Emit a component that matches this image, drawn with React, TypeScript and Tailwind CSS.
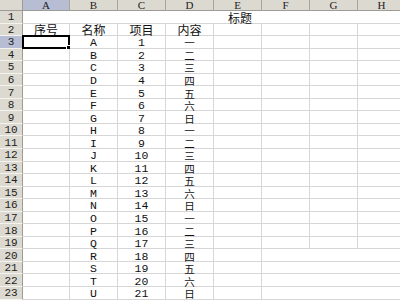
import React from "react";

const COLS = ["A", "B", "C", "D", "E", "F", "G", "H"];
const WEEK = ["一", "二", "三", "四", "五", "六", "日"];

const latin = { fontFamily: '"Liberation Mono", "Noto Sans CJK SC", monospace' };
const cjk = { fontFamily: '"Noto Sans CJK SC", "Liberation Sans", sans-serif' };

function cellText(row: number, col: number): string {
  if (row === 2) {
    return ["序号", "名称", "项目", "内容"][col] ?? "";
  }
  if (row >= 3) {
    const i = row - 3;
    if (col === 1) return String.fromCharCode(65 + i);
    if (col === 2) return String(i + 1);
    if (col === 3) return WEEK[i % 7];
  }
  return "";
}

function DataCell({ row, col }: { row: number; col: number }) {
  const text = cellText(row, col);
  const hasRight = row <= 19 || col <= 4;
  const isHeading = row === 2;
  const isWeek = row >= 3 && col === 3;
  const selected = row === 3 && col === 0;
  const font = isHeading
    ? { ...cjk, fontSize: "12px", lineHeight: "12px" }
    : isWeek
    ? { ...cjk, fontSize: "10.5px", lineHeight: "11px" }
    : { ...latin, fontSize: "11.5px", lineHeight: "11px" };
  return (
    <div
      className={
        (hasRight ? "border-r border-[#d6d6d6] " : "") +
        "relative flex items-center justify-center border-b border-[#d6d6d6] bg-white leading-none text-[#111]"
      }
    >
      <span style={font} className="block translate-y-[1px]">
        {text}
      </span>
      {selected && (
        <>
          <div className="absolute -left-[1px] -top-[1px] -right-[1px] -bottom-[1px] border-2 border-black" />
          <div className="absolute -right-[2px] -bottom-[2px] h-[5px] w-[5px] border border-white bg-black" />
        </>
      )}
    </div>
  );
}

function RowHeader({ n }: { n: number }) {
  const sel = n === 3;
  return (
    <div
      className={
        (sel ? "bg-[#b7bed4] " : "bg-[#dcd9d1] ") +
        "flex items-center justify-center border-b border-r border-b-[#f4f3ef] border-r-[#9d9b94] text-[11px] leading-none text-[#222]"
      }
      style={latin}
    >
      <span className="block translate-y-[1px]">{n}</span>
    </div>
  );
}

export default function App() {
  const rows = Array.from({ length: 23 }, (_, i) => i + 1);
  return (
    <div className="h-[300px] w-[400px] overflow-hidden bg-white">
      <div className="grid w-[430px] grid-cols-[23px_47px_48px_48px_48px_48px_48px_48px_48px] grid-rows-[11px_repeat(23,12.55px)]">
        {/* corner */}
        <div className="border-b border-r border-[#9d9b94] bg-[#dcd9d1]" />
        {COLS.map((c, i) => (
          <div
            key={c}
            className={
              (i === 0 ? "bg-[#b7bed4] " : "bg-[#dcd9d1] ") +
              "flex items-center justify-center border-b border-r border-b-[#9d9b94] border-r-[#a9a69e] text-[11px] leading-none text-[#222]"
            }
            style={{ fontFamily: '"Liberation Serif", serif' }}
          >
            {c}
          </div>
        ))}
        {rows.map((r) =>
          r === 1 ? (
            <React.Fragment key={r}>
              <RowHeader n={1} />
              <div className="col-span-8 flex items-center border-b border-[#d6d6d6] bg-white pl-[205px] text-[12px] leading-none text-[#111]">
                <span style={{ ...cjk, lineHeight: "12px" }} className="block translate-y-[1px]">标题</span>
              </div>
            </React.Fragment>
          ) : (
            <React.Fragment key={r}>
              <RowHeader n={r} />
              {COLS.map((_, c) => (
                <DataCell key={c} row={r} col={c} />
              ))}
            </React.Fragment>
          )
        )}
      </div>
    </div>
  );
}
